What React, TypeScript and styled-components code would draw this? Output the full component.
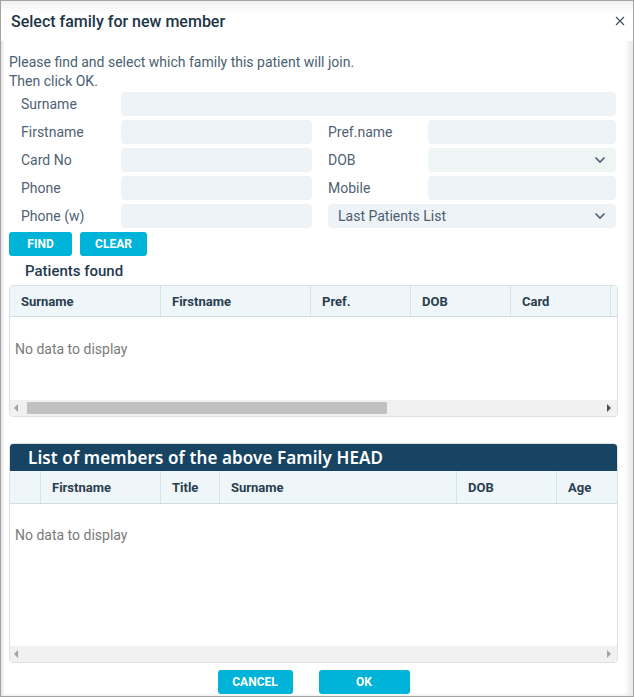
import React from "react";
import styled, { createGlobalStyle } from "styled-components";

const GlobalStyle = createGlobalStyle`
    html, body {
        margin: 0;
        padding: 0;
        background: #ffffff;
    }
    body {
        font-family: Roboto, "Liberation Sans", sans-serif;
    }
    * {
        box-sizing: border-box;
    }
`;

const Dialog = styled.div`
    width: 634px;
    height: 697px;
    border: 1px solid #a3a3a3;
    box-shadow: inset 2px 0 2px #e6e6e6, inset -5px 0 4px #ececec;
    background: #ffffff;
    display: flex;
    flex-direction: column;
`;

const TitleBar = styled.div`
    height: 40px;
    padding: 0 7px 0 10px;
    display: flex;
    align-items: center;
    justify-content: space-between;
    background: linear-gradient(#f1f1f1, #ffffff 12px);
`;

const Title = styled.h1`
    margin: 0;
    font-size: 16px;
    font-weight: 500;
    color: #1d3547;
`;

const CloseButton = styled.button`
    border: 0;
    background: transparent;
    padding: 0;
    width: 12px;
    height: 12px;
    display: flex;
    align-items: center;
    justify-content: center;
    cursor: pointer;
`;

const Body = styled.div`
    flex: 1;
    padding: 12px 15px 0 8px;
    display: flex;
    flex-direction: column;
`;

const Intro = styled.p`
    margin: 0;
    font-size: 14px;
    line-height: 19px;
    color: #4a5f70;
`;

const FormGrid = styled.div`
    display: grid;
    grid-template-columns: 112px 191px 16px 100px 188px;
    grid-auto-rows: 24px;
    row-gap: 4px;
    margin-top: 1px;
`;

const Label = styled.label<{ $col: number }>`
    grid-column: ${(p) => p.$col};
    padding-left: ${(p) => (p.$col === 1 ? 12 : 0)}px;
    font-size: 14px;
    color: #4f6273;
    display: flex;
    align-items: center;
`;

const Field = styled.div<{ $col: string; $tint?: boolean }>`
    grid-column: ${(p) => p.$col};
    background: ${(p) => (p.$tint ? "#edf5f5" : "#eef3f8")};
    border-radius: 4px;
    display: flex;
    align-items: center;
    justify-content: space-between;
    padding: 0 10px;
    font-size: 14px;
    color: #4a5d6f;
`;

const ButtonRow = styled.div<{ $center?: boolean }>`
    display: flex;
    gap: ${(p) => (p.$center ? 26 : 8)}px;
    justify-content: ${(p) => (p.$center ? "center" : "flex-start")};
    margin-top: ${(p) => (p.$center ? 7 : 4)}px;
`;

const ActionButton = styled.button<{ $w: number }>`
    width: ${(p) => p.$w}px;
    height: 24px;
    border: 0;
    border-radius: 3px;
    background: #00b3d8;
    color: #ffffff;
    font-family: Roboto, "Liberation Sans", sans-serif;
    font-size: 12px;
    font-weight: 700;
    padding: 0;
    cursor: pointer;
`;

const SectionHeading = styled.h2`
    margin: 5px 0 0 16px;
    height: 20px;
    font-size: 15px;
    font-weight: 500;
    line-height: 20px;
    color: #1f3a4d;
`;

const GridBox = styled.div<{ $h: number; $mt: number }>`
    margin-top: ${(p) => p.$mt}px;
    height: ${(p) => p.$h}px;
    width: 609px;
    border: 1px solid #d8e1e4;
    border-radius: 4px;
    display: flex;
    flex-direction: column;
    overflow: hidden;
`;

const PanelTitle = styled.div`
    height: 28px;
    margin: -1px -1px 0 -1px;
    padding-left: 19px;
    background: #174463;
    border-radius: 6px 6px 0 0;
    color: #ffffff;
    font-family: "Noto Sans", "Open Sans", sans-serif;
    font-size: 17px;
    font-weight: 600;
    letter-spacing: 0.1px;
    display: flex;
    align-items: center;
`;

const HeaderRow = styled.div<{ $h: number }>`
    height: ${(p) => p.$h}px;
    display: flex;
    background: #eef6f9;
    border-bottom: 1px solid #d3dde1;
    flex-shrink: 0;
    overflow: hidden;
`;

const HeaderCell = styled.div<{ $w: number }>`
    width: ${(p) => p.$w}px;
    flex-shrink: 0;
    border-right: 1px solid #d8e1e4;
    padding-left: 11px;
    display: flex;
    align-items: center;
    font-size: 13px;
    font-weight: 700;
    color: #2a3e4f;
`;

const EmptyArea = styled.div<{ $pt: number }>`
    flex: 1;
    padding: ${(p) => p.$pt}px 0 0 5px;
    font-size: 14px;
    color: #7a7a7a;
`;

const ScrollTrack = styled.div`
    height: 16px;
    background: #f1f1f1;
    display: flex;
    align-items: center;
    padding: 0 6px 0 4px;
    gap: 9px;
    flex-shrink: 0;
`;

const ScrollThumb = styled.div<{ $w: number }>`
    width: ${(p) => p.$w}px;
    height: 12px;
    background: #c1c1c1;
`;

const Spacer = styled.div`
    flex: 1;
`;

const Arrow = styled.span<{ $dir: "left" | "right"; $dark?: boolean }>`
    width: 0;
    height: 0;
    border-top: 4px solid transparent;
    border-bottom: 4px solid transparent;
    ${(p) =>
        p.$dir === "left"
            ? `border-right: 4px solid ${p.$dark ? "#505050" : "#a3a3a3"};`
            : `border-left: 4px solid ${p.$dark ? "#505050" : "#a3a3a3"};`}
`;

const Chevron = () => (
    <svg width="12" height="8" viewBox="0 0 12 8">
        <polyline
            points="1.5,1.5 6,6 10.5,1.5"
            fill="none"
            stroke="#4b6072"
            strokeWidth="1.6"
        />
    </svg>
);

const CloseIcon = () => (
    <svg width="10" height="10" viewBox="0 0 10 10">
        <path d="M1 1 L9 9 M9 1 L1 9" stroke="#3d4f5e" strokeWidth="1.1" />
    </svg>
);

const patientCols = [
    { name: "Surname", w: 151 },
    { name: "Firstname", w: 150 },
    { name: "Pref.", w: 100 },
    { name: "DOB", w: 100 },
    { name: "Card", w: 100 },
    { name: "", w: 60 }
];

const memberCols = [
    { name: "", w: 31 },
    { name: "Firstname", w: 120 },
    { name: "Title", w: 59 },
    { name: "Surname", w: 237 },
    { name: "DOB", w: 100 },
    { name: "Age", w: 70 }
];

const App: React.FC = () => {
    return (
        <>
            <GlobalStyle />
            <Dialog>
                <TitleBar>
                    <Title>Select family for new member</Title>
                    <CloseButton aria-label="Close">
                        <CloseIcon />
                    </CloseButton>
                </TitleBar>
                <Body>
                    <Intro>
                        Please find and select which family this patient will join.
                        <br />
                        Then click OK.
                    </Intro>
                    <FormGrid>
                        <Label $col={1}>Surname</Label>
                        <Field $col="2 / 6" />

                        <Label $col={1}>Firstname</Label>
                        <Field $col="2" />
                        <Label $col={4}>Pref.name</Label>
                        <Field $col="5" />

                        <Label $col={1}>Card No</Label>
                        <Field $col="2" />
                        <Label $col={4}>DOB</Label>
                        <Field $col="5" $tint>
                            <span />
                            <Chevron />
                        </Field>

                        <Label $col={1}>Phone</Label>
                        <Field $col="2" />
                        <Label $col={4}>Mobile</Label>
                        <Field $col="5" />

                        <Label $col={1}>Phone (w)</Label>
                        <Field $col="2" />
                        <Field $col="4 / 6">
                            <span>Last Patients List</span>
                            <Chevron />
                        </Field>
                    </FormGrid>

                    <ButtonRow>
                        <ActionButton $w={63}>FIND</ActionButton>
                        <ActionButton $w={67}>CLEAR</ActionButton>
                    </ButtonRow>

                    <SectionHeading>Patients found</SectionHeading>
                    <GridBox $h={132} $mt={4}>
                        <HeaderRow $h={31}>
                            {patientCols.map((c, i) => (
                                <HeaderCell key={`p-${i}`} $w={c.w}>
                                    {c.name}
                                </HeaderCell>
                            ))}
                        </HeaderRow>
                        <EmptyArea $pt={24}>No data to display</EmptyArea>
                        <ScrollTrack>
                            <Arrow $dir="left" />
                            <ScrollThumb $w={360} />
                            <Spacer />
                            <Arrow $dir="right" $dark />
                        </ScrollTrack>
                    </GridBox>

                    <GridBox $h={220} $mt={26}>
                        <PanelTitle>List of members of the above Family HEAD</PanelTitle>
                        <HeaderRow $h={33}>
                            {memberCols.map((c, i) => (
                                <HeaderCell key={`m-${i}`} $w={c.w}>
                                    {c.name}
                                </HeaderCell>
                            ))}
                        </HeaderRow>
                        <EmptyArea $pt={23}>No data to display</EmptyArea>
                        <ScrollTrack>
                            <Arrow $dir="left" />
                            <Spacer />
                            <Arrow $dir="right" />
                        </ScrollTrack>
                    </GridBox>

                    <ButtonRow $center>
                        <ActionButton $w={75}>CANCEL</ActionButton>
                        <ActionButton $w={91}>OK</ActionButton>
                    </ButtonRow>
                </Body>
            </Dialog>
        </>
    );
};

export default App;
